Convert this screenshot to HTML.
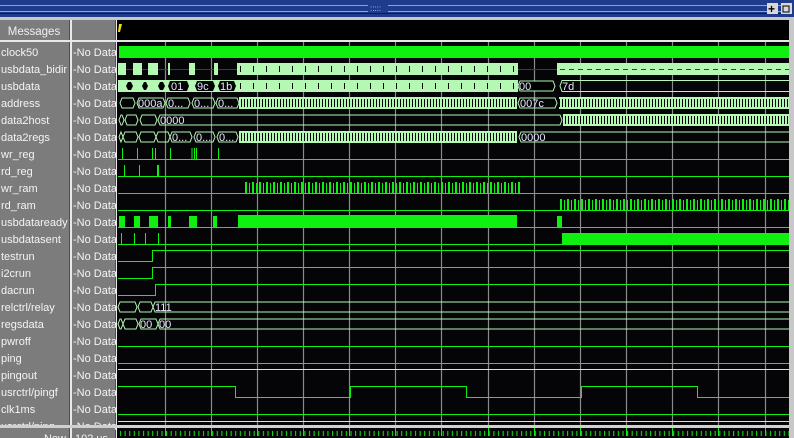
<!DOCTYPE html>
<html><head><meta charset="utf-8"><style>
body{margin:0;width:794px;height:438px;overflow:hidden;background:#000;font-family:"Liberation Sans",Tahoma,sans-serif;}
svg{position:absolute;left:0;top:0}
</style></head><body>
<svg width="794" height="438" xmlns="http://www.w3.org/2000/svg" font-family="Liberation Sans, sans-serif">
<defs>
<pattern id="dbus" patternUnits="userSpaceOnUse" x="0" y="9" width="6" height="17">
<rect x="0" y="3" width="6" height="12" fill="#b4f8b4"/>
<rect x="1" y="5" width="1" height="8" fill="#000"/>
<rect x="4" y="5" width="1" height="8" fill="#000"/>
</pattern>
<pattern id="dpul" patternUnits="userSpaceOnUse" x="0" y="9" width="7" height="17">
<rect x="0" y="3" width="2" height="11" fill="#10f010"/>
<rect x="4" y="4" width="1" height="10" fill="#10f010"/>
</pattern>
<pattern id="tick" patternUnits="userSpaceOnUse" x="0" y="9" width="13" height="17">
<rect x="0" y="3" width="13" height="12" fill="#b4f8b4"/>
<rect x="6" y="6" width="1" height="6" fill="#000"/>
</pattern>
<pattern id="tk2" patternUnits="userSpaceOnUse" x="119" y="0" width="4.61" height="438"><rect x="1" y="0" width="1" height="438" fill="#10f010"/></pattern>
</defs>
<!-- title bar -->
<rect x="0" y="0" width="794" height="17" fill="#1f3b8c"/>
<rect x="0" y="5" width="785" height="1" fill="#8aa0d8"/>
<rect x="0" y="11" width="785" height="1" fill="#8aa0d8"/>
<rect x="0" y="13" width="785" height="1" fill="#0a1a50"/>
<rect x="368" y="4" width="20" height="8" fill="#1f3b8c"/>
<text x="370" y="11" font-size="8" fill="#c0c8f0">:::::</text>
<rect x="767" y="3" width="11" height="11" fill="#d8d8d8"/><text x="768" y="13" font-size="12" font-weight="bold" fill="#000">+</text>
<rect x="781" y="3" width="11" height="11" fill="#d8d8d8"/><rect x="783" y="6" width="6" height="6" fill="none" stroke="#000"/>
<rect x="0" y="17" width="794" height="3" fill="#c8c8c8"/>
<!-- left panels -->
<rect x="0" y="20" width="117" height="418" fill="#7c7c7c"/>
<rect x="69" y="20" width="1" height="418" fill="#505050"/>
<rect x="70" y="20" width="2" height="418" fill="#e8e8e8"/>
<rect x="115" y="20" width="1" height="418" fill="#505050"/>
<rect x="116" y="20" width="1" height="418" fill="#e8e8e8"/>
<rect x="0" y="40" width="117" height="2" fill="#e8e8e8"/>
<rect x="117" y="20" width="672" height="22" fill="#000"/>
<rect x="117" y="40" width="672" height="2" fill="#e8e8e8"/>
<path d="M119 24 L122 24 L120 32 L118 32Z" fill="#f0e000"/>
<rect x="789" y="20" width="5" height="418" fill="#c8c8c8"/>
<text x="34" y="35" font-size="11.5" fill="#f0f0f0" text-anchor="middle">Messages</text>
<g font-size="11" fill="#f4f4f4">
<text x="1" y="56">clock50</text><text x="1" y="73">usbdata_bidir</text><text x="1" y="90">usbdata</text>
<text x="1" y="107">address</text><text x="1" y="124">data2host</text><text x="1" y="141">data2regs</text>
<text x="1" y="158">wr_reg</text><text x="1" y="175">rd_reg</text><text x="1" y="192">wr_ram</text>
<text x="1" y="209">rd_ram</text><text x="1" y="226">usbdataready</text><text x="1" y="243">usbdatasent</text>
<text x="1" y="260">testrun</text><text x="1" y="277">i2crun</text><text x="1" y="294">dacrun</text>
<text x="1" y="311">relctrl/relay</text><text x="1" y="328">regsdata</text><text x="1" y="345">pwroff</text>
<text x="1" y="362">ping</text><text x="1" y="379">pingout</text><text x="1" y="396">usrctrl/pingf</text>
<text x="1" y="413">clk1ms</text><text x="1" y="430">usrctrl/ping</text>
</g>
<g font-size="11" fill="#f4f4f4">
<text x="73" y="56">-No Data</text><text x="73" y="73">-No Data</text><text x="73" y="90">-No Data</text>
<text x="73" y="107">-No Data</text><text x="73" y="124">-No Data</text><text x="73" y="141">-No Data</text>
<text x="73" y="158">-No Data</text><text x="73" y="175">-No Data</text><text x="73" y="192">-No Data</text>
<text x="73" y="209">-No Data</text><text x="73" y="226">-No Data</text><text x="73" y="243">-No Data</text>
<text x="73" y="260">-No Data</text><text x="73" y="277">-No Data</text><text x="73" y="294">-No Data</text>
<text x="73" y="311">-No Data</text><text x="73" y="328">-No Data</text><text x="73" y="345">-No Data</text>
<text x="73" y="362">-No Data</text><text x="73" y="379">-No Data</text><text x="73" y="396">-No Data</text>
<text x="73" y="413">-No Data</text><text x="73" y="430">-No Data</text>
</g>
<!-- waveform bg -->
<rect x="117" y="42" width="672" height="383" fill="#050508"/>
<g stroke="#8a8a8a" stroke-width="1.2">
<path d="M165.5 42V425M211.5 42V425M257.5 42V425M303.5 42V425M349.5 42V425M395.5 42V425M441.5 42V425M488.5 42V425M534.5 42V425M580.5 42V425M626.5 42V425M672.5 42V425M718.5 42V425M765.5 42V425"/>
</g>
<!-- clock50 -->
<rect x="119" y="46" width="670" height="12" fill="#10f010"/>
<!-- usbdata_bidir t=60 -->
<path d="M118 69.5H557" stroke="#2030d0"/>
<g fill="#b4f8b4">
<rect x="118" y="63" width="8" height="12"/><rect x="133" y="63" width="9" height="12"/><rect x="148" y="63" width="10" height="12"/>
<rect x="168" y="63" width="2" height="12"/><rect x="189" y="63" width="6" height="12"/><rect x="214" y="63" width="4" height="12"/>
</g>
<rect x="237" y="60" width="281" height="17" fill="url(#tick)"/>
<rect x="557" y="63" width="232" height="12" fill="#b4f8b4"/>
<path d="M560 69.5H789" stroke="#2030d0" stroke-dasharray="5,4"/>
<!-- usbdata t=77 -->
<rect x="118" y="80" width="119" height="12" fill="#b4f8b4"/>
<g fill="#000">
<path d="M126 86l2-4h3l2 4-2 4h-3z"/><path d="M142 86l2-4h2l2 4-2 4h-2z"/><path d="M158 86l2-4h3l2 4-2 4h-3z"/>
<path d="M168 86l2-5h17l2 5-2 5h-17z"/><path d="M195 86l2-5h16l2 5-2 5h-16z"/><path d="M218 86l2-5h14l2 5-2 5h-14z"/>
</g>
<rect x="237" y="77" width="281" height="17" fill="url(#tick)"/>
<path d="M518 86l2-5h33l2 5-2 5h-33z" fill="#000" stroke="#b4f8b4"/>
<path d="M789 80.5H562l-2 5.5 2 5.5H789" fill="none" stroke="#b4f8b4"/>
<g font-size="11" fill="#e8e8ff"><text x="171" y="90">01</text><text x="197" y="90">9c</text><text x="220" y="90">1b</text><text x="519" y="90">00</text><text x="562" y="90">7d</text></g>
<!-- bus outlines -->
<g fill="none" stroke="#b4f8b4" stroke-width="1">
<path d="M120 103l2-5h11l2 5-2 5h-11zM137 103l2-5h24l2 5-2 5h-24zM166 103l2-5h20l2 5-2 5h-20zM192 103l2-5h19l2 5-2 5h-19zM216 103l2-5h19l2 5-2 5h-19z"/>
<path d="M518 103l2-5h35l2 5-2 5h-35z"/>
<path d="M119 120l2-5h1l2 5-2 5h-1zM125 120l2-5h9l2 5-2 5h-9zM140 120l2-5h13l2 5-2 5h-13zM158 120l2-5H560l2 5-2 5H160z"/>
<path d="M119 137l2-5h0l2 5-2 5zM123 137l2-5h11l2 5-2 5h-11zM139 137l2-5h13l2 5-2 5h-13zM156 137l2-5h10l2 5-2 5h-10zM170 137l2-5h18l2 5-2 5h-18zM194 137l2-5h17l2 5-2 5h-17zM217 137l2-5h17l2 5-2 5h-17z"/>
<path d="M519 137l2-5H789M519 137l2 5H789"/>
<path d="M118 307l2-5h15l2 5-2 5h-15zM138 307l2-5h11l2 5-2 5h-11zM153 307l2-5H789M153 307l2 5H789"/>
<path d="M118 324l2-5h1l2 5-2 5h-1zM123 324l2-5h11l2 5-2 5h-11zM139 324l2-5h15l2 5-2 5h-15zM158 324l2-5H789M158 324l2 5H789"/>
</g>
<rect x="239" y="94" width="278" height="17" fill="url(#dbus)"/>
<rect x="559" y="94" width="230" height="17" fill="url(#dbus)"/>
<rect x="563" y="111" width="226" height="17" fill="url(#dbus)"/>
<rect x="239" y="128" width="278" height="17" fill="url(#dbus)"/>
<g font-size="11" fill="#e8e8ff">
<text x="138" y="107">000a</text><text x="168" y="107">0...</text><text x="194" y="107">0...</text><text x="218" y="107">0...</text><text x="520" y="107">007c</text>
<text x="160" y="124">0000</text>
<text x="172" y="141">0...</text><text x="196" y="141">0...</text><text x="219" y="141">0...</text><text x="521" y="141">0000</text>
<text x="155" y="311">111</text><text x="140" y="328">00</text><text x="159" y="328">00</text>
</g>
<!-- single-bit signals -->
<g fill="none" stroke="#10f010" stroke-width="1">
<path d="M118 159.5H789M122.5 148V159M137.5 148V159M152.5 148V159M155.5 148V159M170.5 148V159M192 148V159M194.5 148V159M196.5 148V159M218.5 148V159"/>
<path d="M118 176.5H789M124.5 165V176M139.5 165V176M157.5 165V176M158.5 165V176"/>
<path d="M118 193.5H789M118 210.5H789M118 227.5H789M118 244.5H789"/>
<path d="M121.5 233V244M134.5 233V244M145.5 233V244M158.5 233V244"/>
<path d="M118 261.5H152.5V250.5H789M118 278.5H152.5V267.5H789M118 295.5H155.5V284.5H789"/>
<path d="M118 346.5H789M118 363.5H789"/>
<path d="M118 414.5H789"/>
<path d="M118 386.5H235.5V397.5H350.5V386.5H466.5V397.5H581.5V386.5H697.5V397.5H789"/>
</g>
<path d="M118 369.5H789M118 421.5H789" stroke="#b4f8b4"/>
<rect x="243" y="179" width="277" height="17" fill="url(#dpul)"/>
<rect x="560" y="196" width="229" height="17" fill="url(#dpul)"/>
<g fill="#10f010">
<rect x="119" y="216" width="6" height="11"/><rect x="134" y="216" width="6" height="11"/><rect x="149" y="216" width="9" height="11"/>
<rect x="168" y="216" width="3" height="11"/><rect x="189" y="216" width="8" height="11"/><rect x="213" y="216" width="4" height="11"/>
<rect x="238" y="215" width="279" height="12"/><rect x="557" y="216" width="5" height="11"/>
<rect x="562" y="233" width="227" height="12"/>
</g>
<!-- bottom -->
<rect x="0" y="425" width="789" height="3" fill="#d0d0d0"/>
<rect x="117" y="428" width="672" height="10" fill="#050508"/>
<rect x="0" y="428" width="69" height="10" fill="#7c7c7c"/>
<rect x="72" y="428" width="43" height="10" fill="#7c7c7c"/>
<text x="66" y="442" font-size="11" fill="#f4f4f4" text-anchor="end">Now</text>
<text x="75" y="442" font-size="11" fill="#f4f4f4">102 us</text>
<rect x="117" y="431" width="672" height="5" fill="url(#tk2)"/>
<path d="M165.5 428V436M211.5 428V436M257.5 428V436M303.5 428V436M349.5 428V436M395.5 428V436M441.5 428V436M488.5 428V436M534.5 428V436M580.5 428V436M626.5 428V436M672.5 428V436M718.5 428V436M765.5 428V436" stroke="#10f010"/>
</svg>
</body></html>
